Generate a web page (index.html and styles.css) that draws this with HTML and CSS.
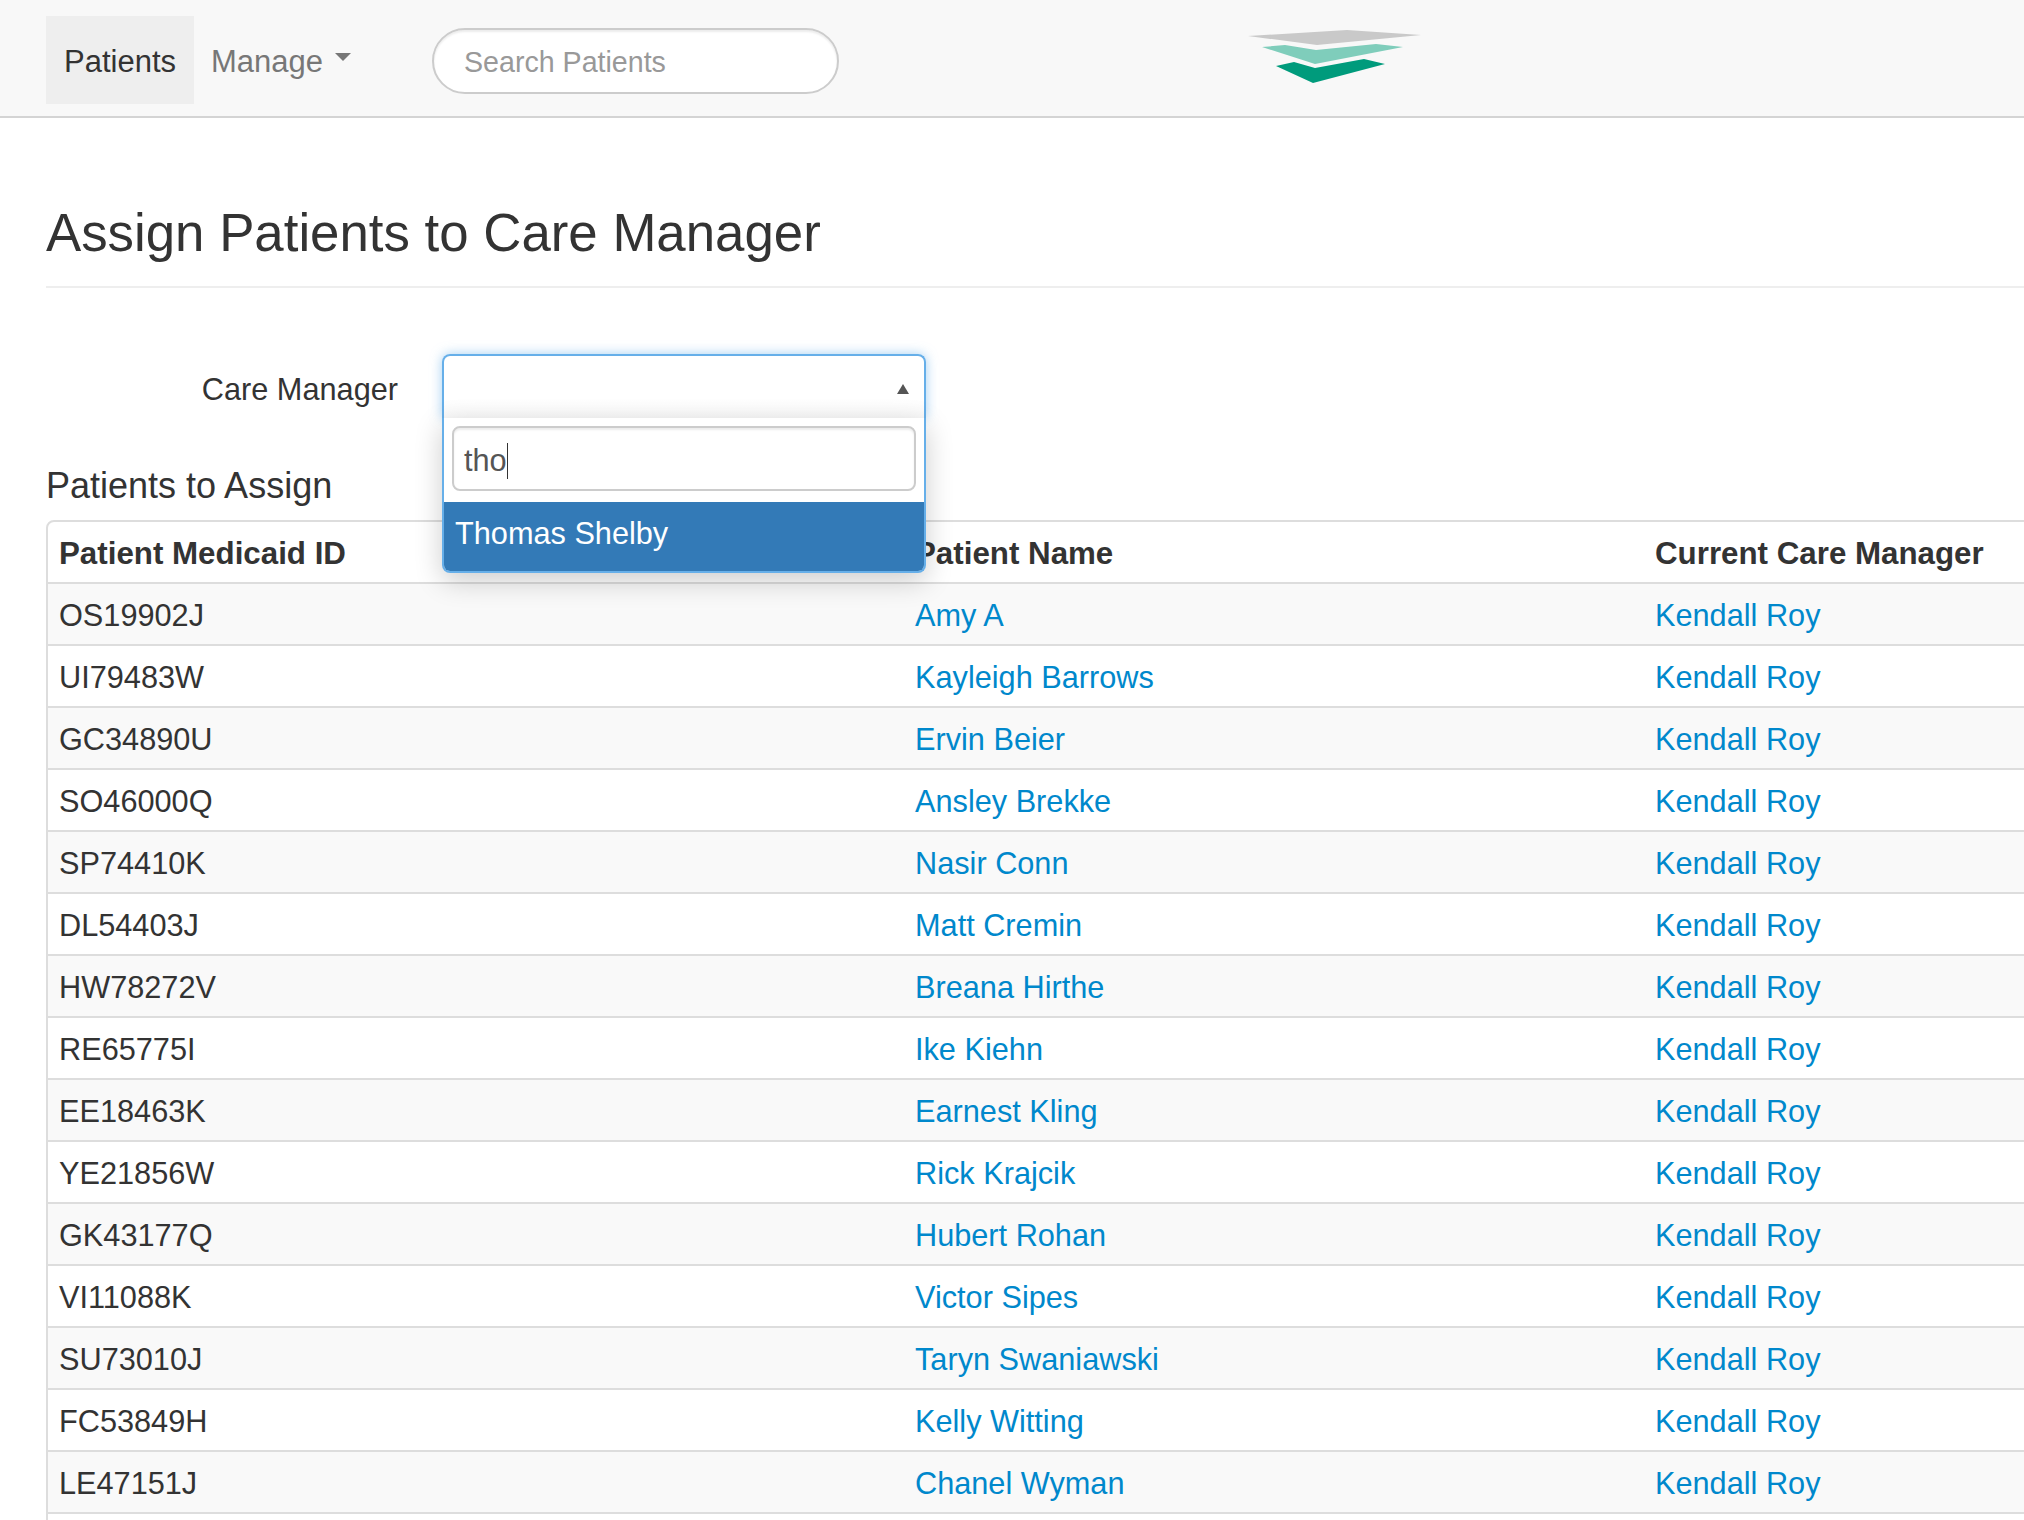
FILE: index.html
```html
<!DOCTYPE html>
<html lang="en">
<head>
<meta charset="utf-8">
<title>Assign Patients to Care Manager</title>
<link rel="stylesheet" href="styles.css">
</head>
<body>
<nav class="navbar">
  <a class="nav-item active">Patients</a>
  <a class="nav-item">Manage<span class="caret"></span></a>
  <div class="nav-search">Search Patients</div>
  <svg class="logo" viewBox="0 0 174 56" width="174" height="56" aria-hidden="true">
    <polygon fill="#c9c9c9" points="0,6 99,0 173,5 69,15"/>
    <polygon fill="#7fcdbb" points="14,17 37,15 68,20 128,14 155,17 67,34"/>
    <polygon fill="#009b7c" points="28,36 46,32 67,38 116,29 137,34 65,53"/>
  </svg>
</nav>
<main class="page">
  <h1 class="title">Assign Patients to Care Manager</h1>
  <div class="form-row">
    <label class="form-label">Care Manager</label>
    <div class="select">
      <div class="select-head"><span class="select-arrow"></span></div>
      <div class="select-drop">
        <div class="select-search-wrap">
          <div class="select-search"><span>tho</span><span class="text-caret"></span></div>
        </div>
        <div class="select-option">Thomas Shelby</div>
      </div>
    </div>
  </div>
  <h2 class="section">Patients to Assign</h2>
  <div class="table-wrap">
    <table class="grid">
      <colgroup><col class="col-a"><col class="col-b"><col class="col-c"></colgroup>
      <thead>
        <tr><th>Patient Medicaid ID</th><th>Patient Name</th><th>Current Care Manager</th></tr>
      </thead>
      <tbody>
        <tr><td>OS19902J</td><td><a>Amy A</a></td><td><a>Kendall Roy</a></td></tr>
        <tr><td>UI79483W</td><td><a>Kayleigh Barrows</a></td><td><a>Kendall Roy</a></td></tr>
        <tr><td>GC34890U</td><td><a>Ervin Beier</a></td><td><a>Kendall Roy</a></td></tr>
        <tr><td>SO46000Q</td><td><a>Ansley Brekke</a></td><td><a>Kendall Roy</a></td></tr>
        <tr><td>SP74410K</td><td><a>Nasir Conn</a></td><td><a>Kendall Roy</a></td></tr>
        <tr><td>DL54403J</td><td><a>Matt Cremin</a></td><td><a>Kendall Roy</a></td></tr>
        <tr><td>HW78272V</td><td><a>Breana Hirthe</a></td><td><a>Kendall Roy</a></td></tr>
        <tr><td>RE65775I</td><td><a>Ike Kiehn</a></td><td><a>Kendall Roy</a></td></tr>
        <tr><td>EE18463K</td><td><a>Earnest Kling</a></td><td><a>Kendall Roy</a></td></tr>
        <tr><td>YE21856W</td><td><a>Rick Krajcik</a></td><td><a>Kendall Roy</a></td></tr>
        <tr><td>GK43177Q</td><td><a>Hubert Rohan</a></td><td><a>Kendall Roy</a></td></tr>
        <tr><td>VI11088K</td><td><a>Victor Sipes</a></td><td><a>Kendall Roy</a></td></tr>
        <tr><td>SU73010J</td><td><a>Taryn Swaniawski</a></td><td><a>Kendall Roy</a></td></tr>
        <tr><td>FC53849H</td><td><a>Kelly Witting</a></td><td><a>Kendall Roy</a></td></tr>
        <tr><td>LE47151J</td><td><a>Chanel Wyman</a></td><td><a>Kendall Roy</a></td></tr>
        <tr><td>&nbsp;</td><td>&nbsp;</td><td>&nbsp;</td></tr>
      </tbody>
    </table>
  </div>
</main>
</body>
</html>
```

FILE: styles.css
```css
* { box-sizing: border-box; }
html, body {
  margin: 0;
  width: 2024px;
  height: 1520px;
  overflow: hidden;
  background: #fff;
}
body {
  font-family: "Liberation Sans", Arial, sans-serif;
  font-size: 30.7px;
  line-height: 40px;
  color: #333;
}
.navbar {
  display: flex;
  align-items: center;
  height: 118px;
  padding-left: 46px;
  padding-bottom: 2px;
  background: #f8f8f8;
  border-bottom: 2px solid #d4d4d4;
}
.nav-item {
  display: flex;
  align-items: center;
  height: 88px;
  margin-top: 6px;
  padding: 4px 17px 0;
  font-size: 31px;
  color: #777;
}
.nav-item.active {
  width: 148px;
  padding: 4px 18px 0;
  background: #eee;
  color: #333;
}
.caret {
  width: 0;
  height: 0;
  margin: 0 0 10px 12px;
  border-top: 8px solid #777;
  border-left: 8px solid transparent;
  border-right: 8px solid transparent;
}
.nav-search {
  width: 407px;
  height: 66px;
  margin: 8px 0 0 64px;
  padding: 12px 30px;
  background: #fff;
  border: 2px solid #ccc;
  border-radius: 33px;
  box-shadow: inset 0 2px 2px rgba(0, 0, 0, .075);
  font-size: 28.6px;
  color: #999;
}
.logo {
  margin: 2px 0 0 409px;
  flex: none;
}
.page {
  padding-left: 46px;
}
.title {
  margin: 85px 0 0;
  padding-bottom: 23px;
  border-bottom: 2px solid #eee;
  font-size: 52.8px;
  line-height: 60px;
  font-weight: 400;
}
.form-row {
  display: flex;
  align-items: flex-start;
  margin-top: 66px;
  height: 112px;
}
.form-label {
  width: 352px;
  margin-top: 16px;
  text-align: right;
}
.select {
  position: relative;
  width: 484px;
  height: 64px;
  margin-left: 44px;
}
.select-head {
  position: relative;
  height: 64px;
  background: linear-gradient(#fff 70%, #f9f9f9);
  border: 2px solid #66afe9;
  border-bottom: 0;
  border-radius: 8px 8px 0 0;
  box-shadow: 0 0 12px rgba(102, 175, 233, .6);
}
.select-arrow {
  position: absolute;
  right: 15px;
  top: 28px;
  width: 0;
  height: 0;
  border-bottom: 10px solid #555;
  border-left: 6px solid transparent;
  border-right: 6px solid transparent;
}
.select-drop {
  position: absolute;
  left: 0;
  right: 0;
  top: 64px;
  z-index: 5;
  background: #fff;
  border: 2px solid #66afe9;
  border-top: 0;
  border-radius: 0 0 8px 8px;
  box-shadow: 0 8px 28px rgba(0, 0, 0, .2);
  overflow: hidden;
}
.select-search-wrap {
  padding: 8px 8px 11px;
}
.select-search {
  display: flex;
  align-items: center;
  height: 65px;
  padding: 4px 10px 0;
  border: 2px solid #ccc;
  border-radius: 8px;
  box-shadow: inset 0 2px 2px rgba(0, 0, 0, .075);
  color: #555;
}
.text-caret {
  width: 1px;
  height: 36px;
  background: #333;
}
.select-option {
  height: 69px;
  padding: 12px 11px;
  background: #337ab7;
  color: #fff;
}
.section {
  margin: 0;
  font-size: 36px;
  line-height: 40px;
  font-weight: 400;
}
.table-wrap {
  margin-top: 14px;
  width: 2100px;
  border: 2px solid #ddd;
  border-radius: 8px 0 0 0;
}
.grid {
  width: 100%;
  table-layout: fixed;
  border-collapse: collapse;
}
.col-a { width: 856px; }
.col-b { width: 740px; }
.grid th, .grid td {
  height: 60px;
  padding: 12px 10px 8px 11px;
  text-align: left;
  border-bottom: 2px solid #ddd;
}
.grid th { font-size: 31.3px; }
.grid tbody tr:nth-child(odd) { background: #f9f9f9; }
.grid a { color: #0088cc; }
```
